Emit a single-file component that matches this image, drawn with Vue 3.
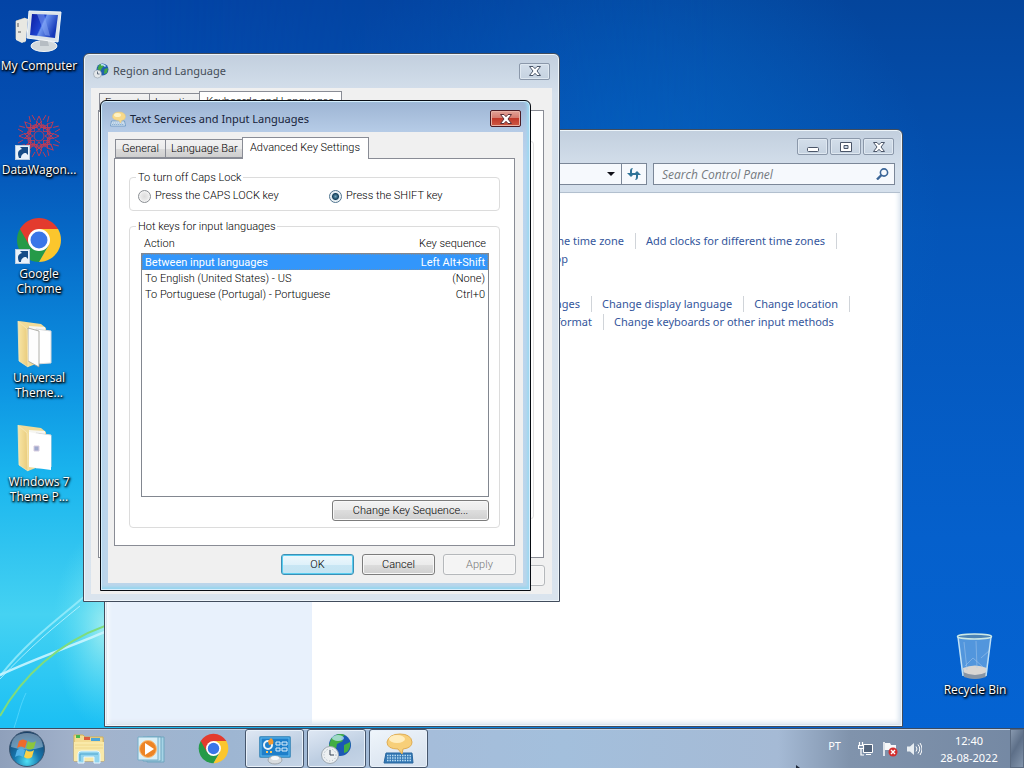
<script setup>
import { ref } from 'vue'

const capsLock = ref('shift')
const search = ref('')
const selected = ref(0)
const hotkeys = [
  { action: 'Between input languages', keys: 'Left Alt+Shift' },
  { action: 'To English (United States) - US', keys: '(None)' },
  { action: 'To Portuguese (Portugal) - Portuguese', keys: 'Ctrl+0' }
]
const tabs = ['General', 'Language Bar', 'Advanced Key Settings']
const activeTab = ref(2)
</script>

<template>
  <div class="desktop">
    <svg class="wallpaper" viewBox="0 0 105 200" width="105" height="200" fill="none" aria-hidden="true">
      <defs>
        <radialGradient id="glow" cx="1" cy="0.5" r="0.5">
          <stop offset="0" stop-color="#b5f3f0" stop-opacity="0.8" />
          <stop offset="1" stop-color="#5fe0f5" stop-opacity="0" />
        </radialGradient>
      </defs>
      <rect width="105" height="200" fill="url(#glow)" />
      <path d="M0 148C30 110 60 90 92 62" stroke="#9ceefb" stroke-width="2" opacity="0.8" />
      <path d="M0 151C30 119 54 99 80 78" stroke="#d5faff" stroke-width="1" opacity="0.7" />
      <path d="M0 147C36 130 70 119 105 104" stroke="#c9f5ff" stroke-width="2.500" opacity="0.9" />
      <path d="M0 188C22 148 60 114 105 98" stroke="#7fdc7c" stroke-width="2" />
      <path d="M14 200C20 182 20 178 26 165" stroke="#5fdcff" stroke-width="1" opacity="0.7" />
    </svg>

    <nav class="shortcuts" aria-label="Desktop">
      <button class="shortcut">
        <svg width="48" height="48" viewBox="0 0 48 48" aria-hidden="true">
          <defs>
            <linearGradient id="scr" x1="0" y1="0" x2="1" y2="0.4">
              <stop offset="0" stop-color="#0d1c9e" /><stop offset="0.5" stop-color="#1e44d0" /><stop offset="0.55" stop-color="#6d95f0" /><stop offset="1" stop-color="#1438b8" />
            </linearGradient>
          </defs>
          <path d="M1 13l9-3v24l-9-3z" fill="#dcdcd6" stroke="#a3a59f" />
          <path d="M1 13l9-3 3 1-2 22-4 2-6-3z" fill="#e8e8e2" />
          <path d="M3 15v4M3 24h3" stroke="#54565a" />
          <ellipse cx="29" cy="38" rx="13" ry="5.500" fill="#d3d9dc" stroke="#f4f6f6" />
          <path d="M25 30h7l2 8h-9z" fill="#b6bdc3" />
          <path d="M14 3l32 1-3 30-31-4z" fill="#dce4ea" stroke="#f5f8fa" />
          <path d="M17 6l26 1-3 23-25-3z" fill="url(#scr)" />
          <path d="M29 6l6 22-5-1-8-21z" fill="#87a8f5" opacity="0.5" />
        </svg>
        <span>My Computer</span>
      </button>
      <button class="shortcut">
        <svg width="48" height="48" viewBox="0 0 48 48" aria-hidden="true">
          <g fill="none" stroke="#b83c5a" stroke-width="1">
            <g v-for="n in 8" :key="n" :transform="`rotate(${n * 45} 24 24)`">
              <path d="M24 18q-5-5 0-14q5 9 0 14M18 14h12M21 9l8 8M27 9l-8 8M17 3l3 5M31 3l-3 5" />
            </g>
            <circle cx="24" cy="24" r="5" /><circle cx="24" cy="24" r="12" stroke-dasharray="3 2" />
          </g>
          <rect x="0.500" y="33.500" width="14" height="14" fill="#eaf2fa" stroke="#b8cce0" />
          <path d="M4 46c-2-5-1-8 3-9l-2-2h8v8l-2-2c-3 0-5 2-5 5z" fill="#174c86" />
        </svg>
        <span>DataWagon...</span>
      </button>
      <button class="shortcut">
        <svg width="48" height="48" viewBox="0 0 48 48" aria-hidden="true">
          <path d="M24 24L4.950 13A22 22 0 0 0 24 46L33.500 29.500z" fill="#259a48" />
          <path d="M4.950 13L14.500 29.500L24 24L24 13L43.050 13A22 22 0 0 0 4.950 13" fill="#e33b2e" />
          <path d="M33.500 29.500L24 46A22 22 0 0 0 43.050 13L24 13z" fill="#fbc62d" />
          <circle cx="24" cy="24" r="11" fill="#fff" /><circle cx="24" cy="24" r="8.500" fill="#3a76e8" />
          <rect x="0.500" y="33.500" width="14" height="14" fill="#eaf2fa" stroke="#b8cce0" />
          <path d="M4 46c-2-5-1-8 3-9l-2-2h8v8l-2-2c-3 0-5 2-5 5z" fill="#174c86" />
        </svg>
        <span>Google<br />Chrome</span>
      </button>
      <button v-for="(name, i) in ['Universal Theme...', 'Windows 7 Theme P...']" :key="name" class="shortcut">
        <svg width="48" height="48" viewBox="0 0 48 48" aria-hidden="true">
          <defs>
            <linearGradient :id="'fold' + i" x1="0" x2="1"><stop offset="0" stop-color="#f8e6a6" /><stop offset="1" stop-color="#e9cb7c" /></linearGradient>
          </defs>
          <path d="M4 1l22 3 5 4v32l-18 7z" fill="#f1db98" />
          <path d="M14 6l16 1v35l-16-1z" fill="#f6f6f2" />
          <path d="M21 9l15 2v32l-15 1z" fill="#fff" stroke="#d6d8da" />
          <path v-if="i === 0" d="M13 8l11 3v36l-11-6z" fill="#fdfdfd" stroke="#9c9c94" stroke-width="0.800" />
          <path v-else d="M14 8l22 4v34l-22-3z" fill="#fff" />
          <path v-if="i === 1" d="M19 22h5v5h-5z" fill="#9fa9cd" stroke="#d8cde0" />
          <path d="M3 1l9 8 1 38-9-6z" :fill="`url(#fold${i})`" stroke="#f8e9b8" stroke-width="0.800" />
        </svg>
        <span>{{ name }}</span>
      </button>
    </nav>

    <button class="shortcut recycle">
      <svg width="48" height="48" viewBox="0 0 48 48" aria-hidden="true">
        <path d="M7 4l4 38q12 7 25 0l4-38z" fill="#7db2e4" fill-opacity="0.65" />
        <path d="M12 36l1 8q11 5 22 0l1-8q-12-5-24 0z" fill="#d9d6d3" />
        <path d="M12 40q12 6 24 0l-1 5q-11 4-22 0z" fill="#8895a5" />
        <path d="M14 34l8-8 10 9M30 26l9-8M13 10l3 28M25 9l1 27" stroke="#a9caec" fill="none" opacity="0.5" />
        <path d="M7 5l5 39M40 5l-5 39" stroke="#bfe0f6" stroke-width="1.500" />
        <ellipse cx="23.500" cy="4.500" rx="17" ry="2.500" fill="#4c84b6" stroke="#cce9e6" stroke-width="1.500" />
      </svg>
      <span>Recycle Bin</span>
    </button>

    <section class="window panel" aria-label="Control Panel">
      <header class="caption">
        <div class="controls">
          <button class="ctl" aria-label="Minimize"><svg width="12" height="10" viewBox="0 0 12 10"><rect x="0.500" y="5.500" width="11" height="4" rx="1" fill="#fff" stroke="#4a5568" /></svg></button>
          <button class="ctl" aria-label="Maximize"><svg width="12" height="10" viewBox="0 0 12 10"><path d="M.5.5h11v9H.5zM4 3.500h4v3H4z" fill="#fff" fill-rule="evenodd" stroke="#4a5568" /></svg></button>
          <button class="ctl" aria-label="Close"><svg width="12" height="10" viewBox="0 0 12 10"><path d="M.5.5h3.500L6 2.700 8 .5h3.500L8 5l3.500 4.500H8L6 7.300 4 9.500H.5L4 5z" fill="#fff" stroke="#4a5568" /></svg></button>
        </div>
      </header>
      <div class="toolbar">
        <div class="address">
          <button aria-label="Previous locations"><svg width="8" height="4" viewBox="0 0 8 4"><path d="M0 0h8L4 4z" fill="#101018" /></svg></button>
          <button class="refresh" aria-label="Refresh">
            <svg width="14" height="12" viewBox="0 0 14 12" fill="#2f7398"><path d="M6 0Q3 0 3 3v2H0l4 4 4-4H5V3q0-2 1-3zM8 12q3 0 3-3V7h3l-4-4-4 4h3v2q0 2-1 3z" /></svg>
          </button>
        </div>
        <label class="search">
          <input v-model="search" type="text" placeholder="Search Control Panel" aria-label="Search Control Panel" />
          <svg width="13" height="12" viewBox="0 0 13 12" fill="none"><circle cx="8" cy="4.500" r="3.600" stroke="#3b6698" stroke-width="1.600" /><path d="M5.500 7L1 11.500" stroke="#3b6698" stroke-width="2.400" /></svg>
        </label>
      </div>
      <div class="body">
        <aside class="side"></aside>
        <main class="tasks">
          <div class="row time"><a href="#">Change the time zone</a><a href="#">Add clocks for different time zones</a><i></i></div>
          <div class="row gadget"><a href="#">Add the Clock gadget to the desktop</a></div>
          <div class="row langs"><a href="#">Install or uninstall display languages</a><a href="#">Change display language</a><a href="#">Change location</a><i></i></div>
          <div class="row format"><a href="#">Change the date, time, or number format</a><a href="#">Change keyboards or other input methods</a></div>
        </main>
      </div>
    </section>

    <section class="window region" aria-label="Region and Language">
      <header class="caption">
        <svg class="capicon" width="16" height="16" viewBox="0 0 32 32" aria-hidden="true">
          <circle cx="19" cy="13" r="12" fill="#205fae" /><path d="M12 4q6-4 11 1l-5 5-3 6-6-4zM23 12l7-2-2 10-6 2z" fill="#43a847" />
          <path d="M16 4q5-2 9 3" stroke="#bfe4ff" stroke-width="3" fill="none" />
          <circle cx="9" cy="22" r="8" fill="#e4e8eb" stroke="#7e8c98" /><path d="M9 17v5h4" stroke="#38485c" fill="none" stroke-width="1.500" />
        </svg>
        <h2>Region and Language</h2>
        <button class="ctl" aria-label="Close"><svg width="12" height="10" viewBox="0 0 12 10"><path d="M.5.5h3.500L6 2.700 8 .5h3.500L8 5l3.500 4.500H8L6 7.300 4 9.500H.5L4 5z" fill="#fff" stroke="#4a5568" /></svg></button>
      </header>
      <div class="client">
        <div class="tabs">
          <button>Formats</button><button>Location</button><button class="on">Keyboards and Languages</button>
        </div>
        <div class="page"><div class="groupedge"></div></div>
        <div class="buttons"><button class="btn" disabled aria-label="Apply"></button></div>
      </div>
    </section>

    <section class="window dialog" role="dialog" aria-label="Text Services and Input Languages">
      <header class="caption">
        <svg class="capicon" width="16" height="16" viewBox="0 0 32 32" aria-hidden="true">
          <path d="M3 20h26l2 10H1z" fill="#dfeaf3" stroke="#5d8fbd" stroke-width="1.500" /><path d="M5 24h22M4 27h24" stroke="#6d9ccb" stroke-width="1.500" stroke-dasharray="3 1" />
          <path d="M18 19l3 5 2-5q8-1 8-8Q30 2 18 2T5 11q0 7 13 8z" fill="#f8d98a" stroke="#e6c878" /><ellipse cx="15" cy="8" rx="7" ry="4" fill="#fff3c4" />
        </svg>
        <h2>Text Services and Input Languages</h2>
        <button class="ctl close" aria-label="Close"><svg width="12" height="10" viewBox="0 0 12 10"><path d="M.5.5h3.500L6 2.700 8 .5h3.500L8 5l3.500 4.500H8L6 7.300 4 9.500H.5L4 5z" fill="#fff" stroke="#5a3038" /></svg></button>
      </header>
      <div class="client">
        <div class="tabs" role="tablist">
          <button v-for="(t, i) in tabs" :key="t" role="tab" :aria-selected="activeTab === i" :class="{ on: activeTab === i }" @click="activeTab = i">{{ t }}</button>
        </div>
        <div class="page">
          <fieldset class="caps">
            <legend>To turn off Caps Lock</legend>
            <label><input v-model="capsLock" type="radio" name="caps" value="caps" />Press the CAPS LOCK key</label>
            <label><input v-model="capsLock" type="radio" name="caps" value="shift" />Press the SHIFT key</label>
          </fieldset>
          <fieldset class="hot">
            <legend>Hot keys for input languages</legend>
            <table>
              <thead><tr><th>Action</th><th>Key sequence</th></tr></thead>
              <tbody>
                <tr v-for="(h, i) in hotkeys" :key="h.action" :class="{ sel: selected === i }" @click="selected = i">
                  <td>{{ h.action }}</td><td>{{ h.keys }}</td>
                </tr>
              </tbody>
            </table>
            <button class="btn wide">Change Key Sequence...</button>
          </fieldset>
        </div>
        <div class="buttons">
          <button class="btn default">OK</button>
          <button class="btn">Cancel</button>
          <button class="btn" disabled>Apply</button>
        </div>
      </div>
    </section>

    <footer class="taskbar">
      <button class="start" aria-label="Start">
        <svg width="38" height="38" viewBox="0 0 38 38">
          <defs>
            <radialGradient id="orb" cx="0.5" cy="0.85" r="0.8"><stop offset="0" stop-color="#4fe0f4" /><stop offset="0.45" stop-color="#1777ae" /><stop offset="1" stop-color="#173f68" /></radialGradient>
          </defs>
          <circle cx="19" cy="19" r="17.500" fill="url(#orb)" stroke="#3b5570" />
          <path d="M3 17Q4 3 19 3t16 14q-16 5-32 0z" fill="#e1f1fa" opacity="0.4" />
          <path d="M11 11q4-3 8 0l-2 7q-4-3-8 0z" fill="#ee6a2c" />
          <path d="M20 11q4 3 8 0l-2 7q-4 3-8 0z" fill="#8cc63e" />
          <path d="M9 20q4-3 8 0l-2 7q-4-3-8 0z" fill="#52b2e8" />
          <path d="M18 20q4 3 8 0l-2 7q-4 3-8 0z" fill="#fbd147" />
        </svg>
      </button>
      <div class="pinned">
        <button aria-label="Windows Explorer">
          <svg width="32" height="32" viewBox="0 0 32 32">
            <path d="M1 5V2h9l2 2h18l1 24H1z" fill="#f3dc93" stroke="#d3b057" />
            <path d="M3 2h4v3H3z" fill="#48b94c" /><path d="M11 4h6v3h-6z" fill="#dd5b3d" /><path d="M18 5h9v3h-9z" fill="#4ba4d8" />
            <path d="M1 9h30v19H1z" fill="#f9e9a9" /><path d="M2 12h28M2 15h28" stroke="#efd88b" />
            <path d="M5 30V21q0-3 3-3h16q3 0 3 3v9h-6v-6H11v6z" fill="#92d4ee" stroke="#e8f8ff" /><path d="M7 28v-7h18" stroke="#4fa4cf" fill="none" />
          </svg>
        </button>
        <button aria-label="Windows Media Player">
          <svg width="32" height="32" viewBox="0 0 32 32">
            <path d="M12 4h17v25H12z" fill="#a6d4e6" stroke="#6ea5bf" /><path d="M8 4h18v24H8z" fill="#c3e6f2" stroke="#6ea5bf" /><path d="M3 4h20v23H3z" fill="#d9eff7" stroke="#76aec8" />
            <circle cx="13" cy="16" r="8.500" fill="#ed8425" stroke="#f8bd78" /><path d="M10 10l9 6-9 6z" fill="#fff" />
          </svg>
        </button>
        <button aria-label="Google Chrome">
          <svg width="31" height="31" viewBox="1 1 46 46">
            <path d="M24 24L4.950 13A22 22 0 0 0 24 46L33.500 29.500z" fill="#259a48" />
            <path d="M4.950 13L14.500 29.500L24 24L24 13L43.050 13A22 22 0 0 0 4.950 13" fill="#e33b2e" />
            <path d="M33.500 29.500L24 46A22 22 0 0 0 43.050 13L24 13z" fill="#fbc62d" />
            <circle cx="24" cy="24" r="11" fill="#fff" /><circle cx="24" cy="24" r="8.500" fill="#3a76e8" />
          </svg>
        </button>
      </div>
      <div class="running">
        <button aria-label="Control Panel">
          <svg width="34" height="32" viewBox="0 0 34 32">
            <rect x="1.500" y="3.500" width="31" height="21" rx="1" fill="#2488cc" stroke="#4e92bf" /><rect x="3" y="5" width="28" height="18" fill="#1e7fca" stroke="#62b9ec" />
            <circle cx="10" cy="12" r="4" fill="none" stroke="#e9f4fb" stroke-width="2" /><path d="M10 8l3-3a5 5 0 0 1 2 6l-4 1z" fill="#f49a32" />
            <path d="M18 9h4v3h-4zM24 9h5v3h-5zM18 15h4v3h-4zM24 15h5v3h-5z" fill="none" stroke="#dff1fc" /><path d="M8 19h2M12 19h2" stroke="#ffc65a" stroke-width="2" />
            <ellipse cx="17" cy="27" rx="7" ry="4" fill="#d8dcdf" stroke="#a0a7ae" /><ellipse cx="17" cy="25" rx="4" ry="2" fill="#f7f9fa" />
          </svg>
        </button>
        <button aria-label="Region and Language">
          <svg width="34" height="32" viewBox="0 0 34 32">
            <circle cx="20" cy="12" r="11" fill="#1b58b4" /><path d="M11 6q6-7 14-4l-4 3 2 3-6 3-1 5-4 3-3-6zM24 12l6-3q1 6-3 10l-3 1z" fill="#42ae43" />
            <ellipse cx="18" cy="5" rx="6" ry="3" fill="#c8ecff" opacity="0.7" />
            <circle cx="10" cy="22" r="8.500" fill="#edf0f2" stroke="#9ea8b1" /><circle cx="10" cy="22" r="6" fill="none" stroke="#a8b3bf" stroke-dasharray="1 2" /><path d="M10 17v5h4" stroke="#344354" fill="none" />
          </svg>
        </button>
        <button aria-label="Text Services and Input Languages">
          <svg width="34" height="32" viewBox="0 0 34 32">
            <path d="M4 20h26l1 10H2z" fill="#3478b4" stroke="#28679f" /><path d="M5 22.500h24M5 25h24M5 27.500h24" stroke="#b8dcf3" stroke-width="1.300" stroke-dasharray="1.500 1" />
            <path d="M16 16l4 5 1-5q9-1 9-7Q29 1 18 1T5 9q0 7 11 7z" fill="#f7cf79" stroke="#e0ad53" /><ellipse cx="15" cy="6" rx="8" ry="4" fill="#ffedbd" />
          </svg>
        </button>
      </div>
      <div class="tray">
        <span class="lang">PT</span>
        <svg width="16" height="16" viewBox="0 0 16 16" fill="none" stroke="#fff"><path d="M5.500 3.500h9v8h-9zM8 13.500h5" fill="#52647c" /><path d="M1.500 1v4M4.500 1v4M.5 4.500h5v3h-5zM3 8v6h3" stroke-width="1.200" /></svg>
        <svg width="16" height="16" viewBox="0 0 16 16"><path d="M2 1v14" stroke="#fff" stroke-width="1.500" /><path d="M3 2h5l1 2h5v7H9L8 9H3z" fill="#f6f8fa" /><circle cx="11" cy="11" r="4.500" fill="#d32e2e" /><path d="M9 9l4 4M13 9l-4 4" stroke="#fff" stroke-width="1.400" /></svg>
        <svg width="16" height="16" viewBox="0 0 16 16" fill="none" stroke="#fff"><path d="M1 5.500h3L8 2v12l-4-3.500H1z" fill="#e7edf2" stroke="none" /><path d="M10 5.500q2 2.500 0 5M12 3.500q3.500 4.500 0 9M14 2q4 6 0 12" /></svg>
        <time class="clock" datetime="2022-08-28T12:40"><span>12:40</span><span>28-08-2022</span></time>
      </div>
      <button class="peek" aria-label="Show desktop"></button>
    </footer>
    <svg class="cursor" width="4" height="3" viewBox="0 0 4 3" aria-hidden="true"><path d="M0 0l4 3H0z" fill="#1b2638" /></svg>
  </div>
</template>

<style>
html, body, #app { height: 100%; margin: 0; }
</style>

<style scoped>
* { box-sizing: border-box; }
.desktop {
  position: relative; height: 100%; min-height: 600px; overflow: hidden;
  font-family: "Noto Sans", "Open Sans", sans-serif; font-size: 11px; line-height: 16px; color: #111;
  background: linear-gradient(180deg, #0344a6 0, #0450b4 18%, #0770cc 34%, #0d94e2 50%, #1ab5ee 62%, #45d2f2 80%, #1cc0f4 94%);
}
/* deep blue right-hand side of the wallpaper */
.desktop::before {
  content: ""; position: absolute; inset: 0;
  background: radial-gradient(circle at 60% 30%, #0566c4 0, transparent 40%), linear-gradient(180deg, #04459c 0, #0455b8 30%, #0560cc 70%, #0464d4 100%);
  mask-image: linear-gradient(90deg, transparent 15%, #000 70%);
}
button { font: inherit; color: inherit; padding: 0; margin: 0; background: none; border: 0; white-space: nowrap; }
h2 { margin: 0; font-size: 11px; font-weight: 400; }
a { color: #34569c; text-decoration: none; white-space: nowrap; }
svg { display: block; flex: none; }
.wallpaper { position: absolute; left: 0; bottom: 40px; }

.shortcuts { position: absolute; left: 0; top: 8px; width: 78px; display: grid; grid-auto-rows: 104px; }
.shortcut { display: flex; flex-direction: column; align-items: center; justify-content: flex-start; gap: 2px; font-family: "Open Sans", "Noto Sans", sans-serif; font-size: 12px; line-height: 15px; color: #fff; white-space: normal; text-shadow: 0 1px 2px #000, 1px 1px 2px #000, 1px 1px 3px #000; }
.shortcut span { max-width: 78px; }
.recycle { position: absolute; right: 10px; bottom: 71px; width: 78px; }

.window { position: absolute; z-index: 1; display: flex; flex-direction: column; border: 1px solid #414c5c; background: linear-gradient(180deg, #c2cfde, #d5e0ec 40px, #dae4ee); box-shadow: inset 0 0 0 1px #eef5fa; border-radius: 6px 6px 0 0; }
.caption { display: flex; align-items: center; }
.caption h2 { flex: 1; color: #444d58; }
.ctl { display: grid; place-items: center; width: 31px; height: 17px; border: 1px solid #8b98aa; border-radius: 2px; background: linear-gradient(#d3deea, #c5d2e0); box-shadow: inset 0 0 0 1px #dfe8f1; }

.panel { left: 104px; top: 129px; width: 799px; bottom: 41px; padding: 0 2px 2px; }
.panel .caption { height: 33px; justify-content: flex-end; padding: 0 6px 0 0; }
.controls { display: flex; gap: 2px; }
.toolbar { height: 30px; display: flex; align-items: flex-start; justify-content: flex-end; gap: 6px; padding: 0 5px 0 0; border-bottom: 1px solid #b2bfce; }
.address, .search { display: flex; height: 22px; border: 1px solid #7b8798; background: #f6f9fd; }
.address { width: 440px; justify-content: flex-end; }
.address button { width: 20px; display: grid; place-items: center; }
.address .refresh { width: 25px; border-left: 1px solid #7b8798; }
.search { width: 242px; align-items: center; padding: 0 5px 0 8px; }
.search input { flex: 1; min-width: 0; border: 0; padding: 0; outline: 0; background: none; font: italic 12px "Open Sans", "Noto Sans", sans-serif; }
.search input::placeholder { color: #75797f; opacity: 1; }
.body { flex: 1; display: flex; background: #fff; box-shadow: inset 0 -4px 4px -2px #dfe7f0, inset -4px 0 4px -2px #dfe9f2; }
.side { width: 205px; background: #e8f1fc; box-shadow: inset 5px 0 5px -4px #fff, inset 0 -5px 4px -3px #dce5ee; }
.tasks { flex: 1; padding-top: 39px; }
.row { display: flex; align-items: center; height: 18px; }
.row a:first-child { display: flex; justify-content: flex-end; }
.row a + a, .row i { border-left: 1px solid #d0d4d9; margin-left: 11px; padding-left: 10px; }
.row i { height: 16px; }
.time a:first-child { width: 312px; }
.gadget { margin-bottom: 27px; }
.gadget a:first-child { width: 256px; }
.langs a:first-child { width: 268px; }
.format a:first-child { width: 280px; }

.region { left: 83px; top: 53px; width: 477px; height: 549px; padding: 0 7px 7px; }
.region .caption { height: 34px; padding-left: 2px; padding-right: 2px; gap: 4px; flex: none; }
.client { flex: 1; display: flex; flex-direction: column; background: #f0f0f0; font-family: Roboto, "Liberation Sans", sans-serif; font-size: 11px; font-weight: 300; color: #000; }
.tabs { display: flex; align-items: flex-end; height: 21px; position: relative; z-index: 1; }
.tabs button { height: 19px; padding: 1px 5px 0; border: 1px solid #898c95; border-right-width: 0; background: linear-gradient(#f2f2f2, #ebebeb 50%, #dbdbdb 50%, #cfcfcf); }
.tabs .on { height: 22px; margin-bottom: -1px; padding: 0 7px 2px 6px; border: 1px solid #898c95; border-bottom: 0; background: #fff; }
.page { border: 1px solid #898c95; background: #fff; }
.region .client { padding: 3px 7px 8px; }
.region .tabs { padding-left: 1px; }
.region .tabs button { width: 50px; flex: none; }
.region .tabs .on { width: 143px; }
.region .page { flex: 1; display: flex; margin: -2px 1px 7px 0; padding: 30px 9px 38px; }
.groupedge { flex: 1; border: 1px solid #dfdfdf; border-radius: 3px; }

.dialog { left: 100px; top: 100px; width: 431px; height: 491px; padding: 0 7px 7px; border-color: #080c12; background: linear-gradient(180deg, #9db4d3 0, #b5cbe6 30px, #bad4ef 60px, #bcd5ea); box-shadow: inset 0 0 0 1px #d5edfc, inset -3px 0 3px #9ed8f0, inset 0 -3px 3px #93d6ef; }
.dialog .caption { height: 31px; padding: 4px 0 0 2px; gap: 4px; flex: none; }
.dialog .caption h2 { color: #17233a; }
.close { border-color: #4b1b24; background: linear-gradient(#e1a399, #d5796d 48%, #c0392b 50%, #cf5a44); box-shadow: inset 0 0 0 1px #e8b2a6; margin-right: 2px; }
.dialog .client { padding: 5px 8px 8px 6px; }
.dialog .client .tabs { padding-left: 1px; }
.dialog .tabs button:first-child { width: 50px; }
.dialog .tabs button { width: 77px; flex: none; }
.dialog .tabs .on { width: 127px; }
.dialog .page { flex: 1; display: flex; flex-direction: column; gap: 7px; padding: 10px 14px 17px; }
fieldset { min-width: 0; margin: 0; border: 1px solid #dcdcdc; border-radius: 4px; }
legend { padding: 0 2px; line-height: 17px; }
.caps { display: flex; height: 42px; padding: 2px 8px 0; }
.caps legend { margin-left: -2px; }
.hot legend { margin-left: -5px; }
.caps label { display: flex; align-items: center; gap: 4px; flex: 0 0 191px; height: 16px; white-space: nowrap; }
.caps input { appearance: none; width: 13px; height: 13px; margin: 0; border: 1px solid #8b8f94; border-radius: 50%; background: radial-gradient(#dcdcdc, #f7f7f7); box-shadow: inset 0 0 0 1px #f4f4f4; }
.caps input:checked { border-color: #4f7590; background: radial-gradient(circle, #6fa4bd 0, #143e58 3px, #dceaf2 4px, #eef6fa 6px); }
.hot { flex: 1; display: flex; flex-direction: column; align-items: flex-end; gap: 3px; padding: 0 10px 6px 11px; }
table { align-self: stretch; flex: 1; display: flex; flex-direction: column; }
tr { display: flex; justify-content: space-between; height: 16px; }
th, td { padding: 0 3px; line-height: 18px; white-space: nowrap; }
th { font-weight: 300; }
thead tr { height: 18px; }
tbody { flex: 1; border: 1px solid #828790; }
.sel { background: #3296fb; color: #fff; font-weight: 400; outline: 1px dotted #6f8fae; outline-offset: -1px; }
.buttons { display: flex; justify-content: flex-end; gap: 8px; padding-top: 8px; }
.dialog .buttons { margin-right: -1px; }
.btn { width: 73px; height: 21px; padding-top: 1px; border: 1px solid #7c7c7c; border-radius: 3px; background: linear-gradient(#f3f3f3, #ebebeb 50%, #dddddd 50%, #cfcfcf); box-shadow: inset 0 0 0 1px #f8f8f8; }
.btn.wide { width: 157px; }
.btn.default { border-color: #3c8fb5; background: linear-gradient(#eef8fc, #dff1fa 50%, #c8e6f4 50%, #c5e4f2); box-shadow: inset 0 0 0 1px #58cdf0; }
.btn:disabled { border-color: #b5b8bb; background: #f4f4f4; color: #777; }
.region .buttons { padding-top: 0; }

.taskbar { position: absolute; left: 0; right: 0; bottom: 0; height: 40px; display: flex; align-items: stretch; border-top: 1px solid #3c4b60; background: linear-gradient(90deg, #8fa0bb 0, #a3b3cc 8%, #9db5d1 20%, #a5bdda 42%, #a3bfdc 55%, #a5bad5 76%, #8093ac 83%, #7488a3 100%); box-shadow: inset 0 1px 0 #c2d3e6; }
.start { width: 53px; display: grid; place-items: center; }
.pinned { display: flex; margin-left: 5px; width: 187px; }
.pinned button { width: 62px; display: grid; place-items: center; }
.running { display: flex; gap: 3px; }
.running button { width: 59px; display: grid; place-items: center; border: 1px solid #46566c; border-radius: 3px; background: linear-gradient(160deg, #dfe8f4, #bccde1 60%, #c6d5e7); box-shadow: inset 0 0 0 1px #e9f1fa; }
.running button:last-child { background: linear-gradient(160deg, #eff5fb, #d5e0ed); }
.tray { margin-left: auto; display: flex; align-items: center; gap: 8px; color: #fff; }
.lang { margin-right: 9px; padding-bottom: 6px; }
.clock { display: flex; flex-direction: column; align-items: center; width: 82px; line-height: 17px; margin-left: -2px; }
.peek { width: 14px; border: 1px solid #5b6b81; background: linear-gradient(120deg, #8899af, #5d6f88 45%, #8496ad); }
.cursor { position: absolute; left: 796px; bottom: 0; }
</style>
